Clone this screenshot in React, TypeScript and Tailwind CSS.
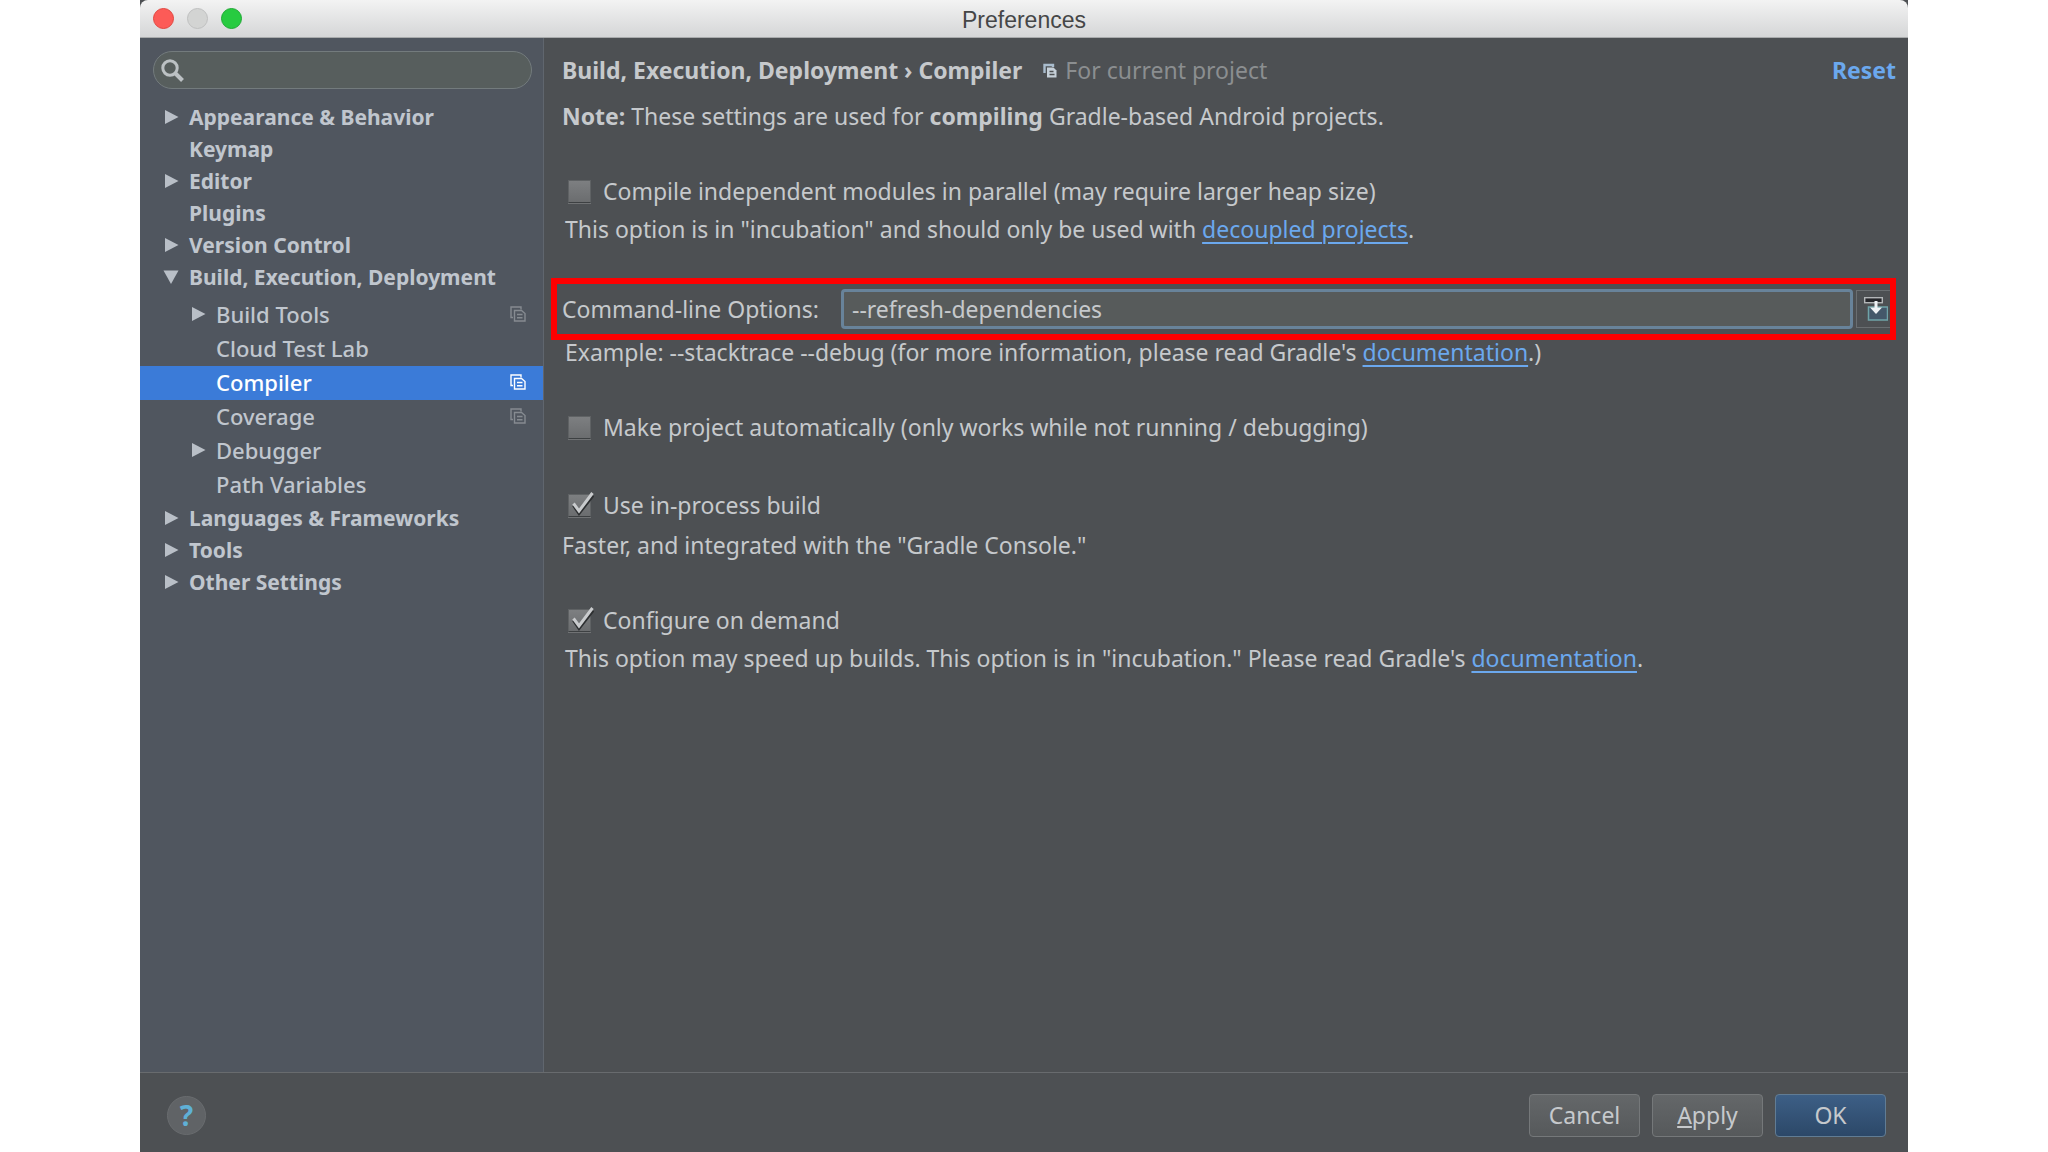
import React from "react";

type Item = { label: string; state?: "open" | "closed"; shared?: boolean; selected?: boolean };

const topItems: Item[] = [
  { label: "Appearance & Behavior", state: "closed" },
  { label: "Keymap" },
  { label: "Editor", state: "closed" },
  { label: "Plugins" },
  { label: "Version Control", state: "closed" },
  { label: "Build, Execution, Deployment", state: "open" },
];

const buildItems: Item[] = [
  { label: "Build Tools", state: "closed", shared: true },
  { label: "Cloud Test Lab" },
  { label: "Compiler", shared: true, selected: true },
  { label: "Coverage", shared: true },
  { label: "Debugger", state: "closed" },
  { label: "Path Variables" },
];

const bottomItems: Item[] = [
  { label: "Languages & Frameworks", state: "closed" },
  { label: "Tools", state: "closed" },
  { label: "Other Settings", state: "closed" },
];

function Arrow({ state }: { state?: "open" | "closed" }) {
  return (
    <svg className="size-4 shrink-0" viewBox="0 0 16 16" fill="#b9bfc7" aria-hidden="true">
      {state === "closed" && <path d="M2 1 L15.5 8 L2 15 Z" />}
      {state === "open" && <path d="M0.5 1.5 H15.5 L8 15 Z" />}
    </svg>
  );
}

function CopyIcon({ className }: { className: string }) {
  return (
    <svg className={className} viewBox="0 0 16 16" fill="none" stroke="currentColor" strokeWidth="1.4" aria-hidden="true">
      <path d="M3 11.5 H1 V1 H11 V3.5" />
      <path d="M4.5 4.5 H11.5 L15 7.5 V15 H4.5 Z" />
      <path d="M7 8.5 H12.5 M7 11.7 H12.5" />
    </svg>
  );
}

function ProjectIcon({ className }: { className: string }) {
  return (
    <svg className={className} viewBox="0 0 15 15" fill="none" aria-hidden="true">
      <path d="M2.5 10 V2 H11 V4" stroke="#a9bccd" strokeWidth="2.4" />
      <path d="M5 4.5 H11.5 L14.5 7.5 V14.5 H5 Z" fill="#c6d0d9" />
      <path d="M7.5 8.5 H11.5 M7.5 11.5 H12.5" stroke="#4d5053" strokeWidth="1.3" />
    </svg>
  );
}

function TopRow({ item }: { item: Item }) {
  return (
    <li>
      <button type="button" className="flex h-8 w-full items-center gap-[10px] pl-[23px] text-left text-[21px] leading-8 font-bold">
        <Arrow state={item.state} />
        {item.label}
      </button>
    </li>
  );
}

function SubRow({ item }: { item: Item }) {
  return (
    <li>
      <button
        type="button"
        className={
          "flex h-[34px] w-full items-center gap-[10px] pr-[17px] pb-[3px] pl-[50px] text-left text-[22px] leading-[30px] font-medium " +
          (item.selected ? "bg-[#3b7bd8] text-white" : "")
        }
      >
        <Arrow state={item.state} />
        <span className="flex-1">{item.label}</span>
        {item.shared && <CopyIcon className={item.selected ? "size-4 text-white" : "size-4 text-[#868b91]"} />}
      </button>
    </li>
  );
}

function Check({ label, checked = false }: { label: string; checked?: boolean }) {
  return (
    <label className="flex h-6 items-center gap-3 pl-[6px]">
      <span className="relative size-[23px] shrink-0">
        <input
          type="checkbox"
          defaultChecked={checked}
          className="peer block size-full appearance-none border border-[#5f6264] border-b-[#3d4042] bg-linear-to-b from-[#7d7f81] to-[#6b6d6f] shadow-[0_1px_0_#707274]"
        />
        <svg
          className="pointer-events-none absolute -top-0.5 left-0 hidden h-[25px] w-[26px] peer-checked:block"
          viewBox="0 0 26 25"
          fill="none"
          aria-hidden="true"
        >
          <path d="M5.5 13.5 L11 21.5 L25 3.5" stroke="#2d2f31" strokeWidth="3" />
          <path d="M5.5 11.5 L11 19 L24.5 1" stroke="#c9cbcd" strokeWidth="3" />
        </svg>
      </span>
      {label}
    </label>
  );
}

function DocLink({ children }: { children: React.ReactNode }) {
  return (
    <a href="#" className="text-[#6ba8ee] underline decoration-2 underline-offset-4">
      {children}
    </a>
  );
}

export default function App() {
  return (
    <div className="flex min-h-screen bg-white px-[140px] font-['Noto_Sans','Open_Sans',sans-serif] text-[23px] leading-6 text-[#c6c9cc]">
      <div className="flex min-w-0 flex-1 flex-col bg-[#4d5053]">
        <header className="relative flex h-[38px] items-center justify-center rounded-t-lg border-b border-[#a9abac] bg-linear-to-b from-[#f3f3f3] to-[#d5d6d7] font-['Liberation_Sans',sans-serif] text-[23px] text-[#454647]">
          <div className="absolute left-[13px] flex gap-[13px]">
            <button type="button" aria-label="Close" className="size-[21px] rounded-full border border-[#e2463f] bg-[#fc5b57]" />
            <button type="button" aria-label="Minimize" className="size-[21px] rounded-full border border-[#bfc0c0] bg-[#d3d4d3]" />
            <button type="button" aria-label="Zoom" className="size-[21px] rounded-full border border-[#1fa934] bg-[#27cb40]" />
          </div>
          <h1 className="pt-0.5">Preferences</h1>
        </header>

        <div className="flex flex-1">
          <nav aria-label="Settings" className="w-[404px] shrink-0 border-r border-[#60666e] bg-[#50565f] pt-[13px] text-[#c0c6ce]">
            <div className="relative mr-[11px] ml-[13px]">
              <input
                type="search"
                aria-label="Search settings"
                className="block h-[38px] w-full rounded-full border border-[#737b7d] bg-[#575e5d] pr-4 pl-10 outline-none"
              />
              <svg
                className="pointer-events-none absolute top-2 left-2 size-[23px]"
                viewBox="0 0 23 23"
                fill="none"
                stroke="#bcc1c4"
                aria-hidden="true"
              >
                <circle cx="9" cy="9" r="7.2" strokeWidth="3" />
                <path d="M14 14 L21.5 21.5" strokeWidth="4" />
              </svg>
            </div>
            <ul className="mt-3">
              {topItems.map((i) => (
                <TopRow key={i.label} item={i} />
              ))}
              <li>
                <ul className="mt-[5px]">
                  {buildItems.map((i) => (
                    <SubRow key={i.label} item={i} />
                  ))}
                </ul>
              </li>
              {bottomItems.map((i) => (
                <TopRow key={i.label} item={i} />
              ))}
            </ul>
          </nav>

          <main className="min-w-0 flex-1 pt-5 pr-3 pl-[18px]">
            <div className="flex items-center">
              <h2 className="font-bold">Build, Execution, Deployment › Compiler</h2>
              <ProjectIcon className="mr-2 ml-5 size-[15px]" />
              <span className="text-[#8b8e90]">For current project</span>
              <a href="#" className="ml-auto font-bold text-[#6ba8ee]">
                Reset
              </a>
            </div>
            <p className="mt-[22px]">
              <b>Note:</b> These settings are used for <b>compiling</b> Gradle-based Android projects.
            </p>

            <section className="mt-[51px]">
              <Check label="Compile independent modules in parallel (may require larger heap size)" />
              <p className="mt-[14px] pl-[3px]">
                This option is in "incubation" and should only be used with <DocLink>decoupled projects</DocLink>.
              </p>
            </section>

            <section className="mt-[37px]">
              <div className="-ml-[11px] flex h-[62px] items-center border-6 border-[#fe0000] pl-[5px]">
                <label htmlFor="options" className="w-[279px] shrink-0">
                  Command-line Options:
                </label>
                <input
                  id="options"
                  type="text"
                  defaultValue="--refresh-dependencies"
                  className="h-10 min-w-0 flex-1 rounded-sm border-3 border-[#68839a] bg-[#575b5b] px-2 outline-none"
                />
                <button
                  type="button"
                  aria-label="Expand options"
                  className="ml-[3px] flex h-[38px] w-[34px] items-center justify-end border border-r-0 border-[#6a6e71]"
                >
                  <svg className="mr-0.5 size-6" viewBox="0 0 24 24" fill="none" aria-hidden="true">
                    <rect x="4.5" y="10" width="19" height="13" fill="#44586a" stroke="#6fa3a8" strokeWidth="1.5" />
                    <rect x="0.7" y="0.7" width="17.6" height="5" fill="#25262a" stroke="#b3b6b8" strokeWidth="1.4" />
                    <path d="M12 4 V12" stroke="#eef1f4" strokeWidth="3" />
                    <path d="M6 10.5 H18 L12 17 Z" fill="#eef1f4" />
                  </svg>
                </button>
              </div>
              <p className="pl-[3px]">
                Example: --stacktrace --debug (for more information, please read Gradle's <DocLink>documentation</DocLink>.)
              </p>
            </section>

            <section className="mt-[51px]">
              <Check label="Make project automatically (only works while not running / debugging)" />
            </section>

            <section className="mt-[54px]">
              <Check label="Use in-process build" checked />
              <p className="mt-4">Faster, and integrated with the "Gradle Console."</p>
            </section>

            <section className="mt-[51px]">
              <Check label="Configure on demand" checked />
              <p className="mt-[14px] pl-[3px]">
                This option may speed up builds. This option is in "incubation." Please read Gradle's{" "}
                <DocLink>documentation</DocLink>.
              </p>
            </section>
          </main>
        </div>

        <footer className="flex h-20 items-center gap-3 border-t border-[#686b6e] pt-[5px] pr-[22px] pl-[27px]">
          <button
            type="button"
            aria-label="Help"
            className="mr-auto size-[39px] rounded-full border border-[#696c6f] bg-[#606366] text-[28px] leading-9 font-bold text-[#5fb0d6]"
          >
            ?
          </button>
          <button type="button" className="h-[43px] w-[111px] rounded-sm border border-[#75787a] bg-linear-to-b from-[#646769] to-[#56595b]">
            Cancel
          </button>
          <button type="button" className="h-[43px] w-[111px] rounded-sm border border-[#75787a] bg-linear-to-b from-[#646769] to-[#56595b]">
            <span className="underline underline-offset-2">A</span>pply
          </button>
          <button type="button" className="h-[43px] w-[111px] rounded-sm border border-[#617c94] bg-linear-to-b from-[#3d5f86] to-[#2c4868]">
            OK
          </button>
        </footer>
      </div>
    </div>
  );
}
